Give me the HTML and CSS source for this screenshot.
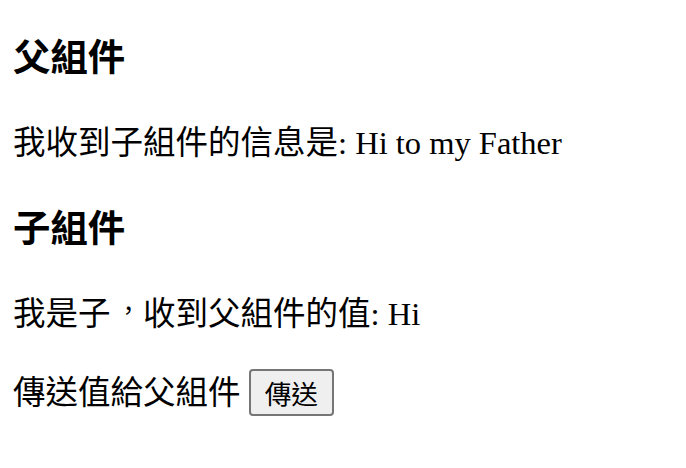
FILE: index.html
```html
<!DOCTYPE html>
<html lang="zh-TW">
<head>
<meta charset="utf-8">
<link rel="stylesheet" href="styles.css">
</head>
<body>
<div class="app">
  <h3 class="title first">父組件</h3>
  <p class="line">我收到子組件的信息是: Hi to my Father</p>
  <div class="child">
    <h3 class="title">子組件</h3>
    <p class="line">我是子<span class="comma">，</span>收到父組件的值: Hi</p>
    <p class="line">傳送值給父組件 <button class="btn">傳送</button></p>
  </div>
</div>
</body>
</html>
```
FILE: styles.css
```css
body {
  margin: 16px 13px;
  font-family: "Liberation Serif", "Noto Sans CJK TC", serif;
  font-size: 32.5px;
  color: #000;
  background: #fff;
}
.title {
  font-size: 37.44px;
  font-weight: bold;
  margin: 35.5px 0 34px;
}
.title.first {
  margin-top: 12px;
}
.line {
  margin: 32px 0;
}
.comma {
  display: inline-block;
  transform: translate(0.04em, -0.08em) scale(0.75);
}
.btn {
  font-family: "Noto Sans CJK TC", sans-serif;
  font-size: 26.67px;
  padding: 2px 14px;
  border: 2px solid #767676;
  border-radius: 4px;
  background: #efefef;
  color: #000;
}
```
